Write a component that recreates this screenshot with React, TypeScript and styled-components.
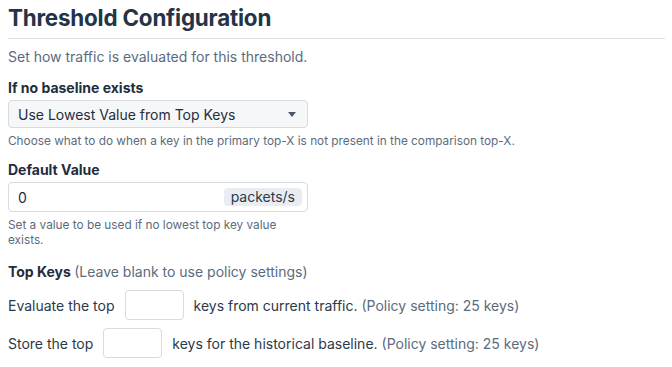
import React from "react";
import styled, { createGlobalStyle } from "styled-components";

const Global = createGlobalStyle`
  html, body { margin: 0; padding: 0; background: #ffffff; }
  body { font-family: Inter, "Noto Sans", "Liberation Sans", sans-serif; -webkit-font-smoothing: antialiased; }
`;

const Page = styled.div`
  padding: 0 7px 0 8px;
  color: #1f2d3d;
`;

const Title = styled.h2`
  margin: 0;
  padding: 4px 0 6px;
  line-height: 28px;
  font-size: 22.4px;
  font-weight: 700;
  color: #243447;
  border-bottom: 1px solid #dde1e6;
  letter-spacing: -0.2px;
`;

const Lead = styled.p`
  margin: 8px 0 0;
  font-size: 14px;
  line-height: 20px;
  color: #5b6b7c;
`;

const Field = styled.div<{ $gap: number }>`
  margin-top: ${(p) => p.$gap}px;
  display: flex;
  flex-direction: column;
  align-items: flex-start;
`;

const Label = styled.div`
  font-size: 14px;
  line-height: 18px;
  font-weight: 700;
  color: #1f2d3d;
  margin-bottom: 3px;
`;

const Muted = styled.span`
  font-weight: 400;
  color: #5b6b7c;
`;

const SelectBox = styled.div`
  box-sizing: border-box;
  width: 300px;
  height: 28px;
  display: flex;
  align-items: center;
  justify-content: space-between;
  padding: 0 11px 0 9px;
  background: #f5f7f9;
  border: 1px solid #d6dbe1;
  border-radius: 4px;
  font-size: 14px;
  color: #1f2d3d;
`;

const Caret = styled.span`
  width: 0;
  height: 0;
  border-left: 4.5px solid transparent;
  border-right: 4.5px solid transparent;
  border-top: 5px solid #4b5867;
`;

const Help = styled.div<{ $width?: number }>`
  margin-top: 6px;
  font-size: 11.8px;
  line-height: 15px;
  color: #5b6b7c;
  max-width: ${(p) => (p.$width ? `${p.$width}px` : "none")};
`;

const InputBox = styled.div`
  box-sizing: border-box;
  width: 300px;
  height: 30px;
  display: flex;
  align-items: center;
  justify-content: space-between;
  padding: 0 5px 0 9px;
  background: #ffffff;
  border: 1px solid #d6dbe1;
  border-radius: 4px;
  font-size: 14px;
  color: #1f2d3d;
`;

const Addon = styled.span`
  background: #e9edf1;
  border-radius: 4px;
  padding: 0 7px;
  height: 18px;
  line-height: 18px;
  font-size: 14px;
  color: #2b3a4a;
`;

const Row = styled.div<{ $gap: number }>`
  margin-top: ${(p) => p.$gap}px;
  display: flex;
  align-items: center;
  gap: 10px;
  font-size: 14px;
  color: #2b3a4a;
`;

const SmallInput = styled.div`
  box-sizing: border-box;
  width: 59px;
  height: 30px;
  border: 1px solid #d6dbe1;
  border-radius: 4px;
  background: #fff;
`;

export default function App() {
  return (
    <>
      <Global />
      <Page>
        <Title>Threshold Configuration</Title>
        <Lead>Set how traffic is evaluated for this threshold.</Lead>

        <Field $gap={12}>
          <Label>If no baseline exists</Label>
          <SelectBox>
            <span>Use Lowest Value from Top Keys</span>
            <Caret />
          </SelectBox>
          <Help>Choose what to do when a key in the primary top-X is not present in the comparison top-X.</Help>
        </Field>

        <Field $gap={12}>
          <Label>Default Value</Label>
          <InputBox>
            <span>0</span>
            <Addon>packets/s</Addon>
          </InputBox>
          <Help $width={290}>Set a value to be used if no lowest top key value exists.</Help>
        </Field>

        <Field $gap={15}>
          <Label>
            Top Keys <Muted>(Leave blank to use policy settings)</Muted>
          </Label>
        </Field>

        <Row $gap={6}>
          <span>Evaluate the top</span>
          <SmallInput />
          <span>
            keys from current traffic. <Muted>(Policy setting: 25 keys)</Muted>
          </span>
        </Row>
        <Row $gap={8}>
          <span>Store the top</span>
          <SmallInput />
          <span>
            keys for the historical baseline. <Muted>(Policy setting: 25 keys)</Muted>
          </span>
        </Row>
      </Page>
    </>
  );
}
